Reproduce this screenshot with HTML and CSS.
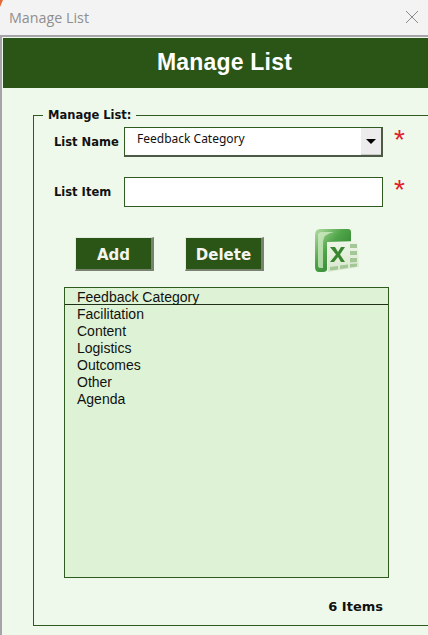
FILE: index.html
```html
<!DOCTYPE html>
<html lang="en">
  <head>
    <meta charset="UTF-8" />
    <meta name="viewport" content="width=device-width, initial-scale=1.0" />
    <title>Manage List</title>
    <link rel="stylesheet" href="styles.css">
  </head>
  <body>
    <div class="titlebar">
      <span class="corner"></span>
      <span class="titlebar-text">Manage List</span>
      <svg class="close" width="14" height="14" viewBox="0 0 14 14">
        <path d="M1 1L13 13M13 1L1 13" stroke="#8a8a8a" stroke-width="1" fill="none" />
      </svg>
    </div>

    <div class="window">
      <h1 class="banner">Manage List</h1>

      <fieldset class="panel">
        <legend>Manage List:</legend>

        <div class="field">
          <label class="field-label">List Name</label>
          <div class="combo">
            <span class="combo-value">Feedback Category</span>
            <span class="combo-arrow"><i></i></span>
          </div>
          <span class="required">*</span>
        </div>

        <div class="field field-item">
          <label class="field-label" for="list-item">List Item</label>
          <input class="text-input" id="list-item" type="text" />
          <span class="required">*</span>
        </div>

        <div class="actions">
          <button class="btn">Add</button>
          <button class="btn">Delete</button>
          <svg class="excel" width="46" height="46" viewBox="0 0 46 46">
            <defs>
              <linearGradient id="book" x1="0" y1="0" x2="1" y2="1">
                <stop offset="0" stop-color="#b5dca6" />
                <stop offset="0.4" stop-color="#4fa548" />
                <stop offset="1" stop-color="#1f6e25" />
              </linearGradient>
              <linearGradient id="sheet" x1="0" y1="0" x2="0" y2="1">
                <stop offset="0" stop-color="#eef5e8" />
                <stop offset="1" stop-color="#d9e8cd" />
              </linearGradient>
              <filter id="soft"><feGaussianBlur stdDeviation="0.4" /></filter>
            </defs>
            <g filter="url(#soft)">
              <path d="M6 2H34Q37 2 37 5V15H16Q13 15 13 18V42Q13 45 9 45H5Q1 45 1 40V8Q1 2 6 2Z" fill="url(#book)" />
              <path d="M4 8Q4 5 8 5H20Q9 7 9 15V41H6Q4 41 4 38Z" fill="#d3ecc6" opacity="0.75" />
              <path d="M13 15L44 14L45 40L14 45Z" fill="url(#sheet)" />
              <path d="M16 20L21 20L24 25L27 20L31 20L26 27.5L31 35L27 35L24 30L20 35L16 35L22 27.5Z" fill="#37872f" />
              <path d="M36 17L43 17V21L36 21ZM36 24L43 24V28L36 28ZM36 31L43 31V35L36 35.5ZM36 37L43 36.5V39.5L36 40.5ZM26 38.5L34 37.5V41L26 42ZM16 40L24 39V42.5L16 43.5Z" fill="#a3c796" />
            </g>
          </svg>
        </div>

        <div class="listbox">
          <div class="listbox-head">Feedback Category</div>
          <ul class="listbox-items">
            <li>Facilitation</li>
            <li>Content</li>
            <li>Logistics</li>
            <li>Outcomes</li>
            <li>Other</li>
            <li>Agenda</li>
          </ul>
        </div>

        <div class="count">6 Items</div>
      </fieldset>
    </div>
  </body>
</html>
```

FILE: styles.css
```css
html,
body {
  margin: 0;
  height: 100%;
}
body {
  width: 428px;
  height: 635px;
  overflow: hidden;
  background-color: #eff9eb;
  font-family: 'Liberation Sans', Arial, sans-serif;
  color: #111;
}
.titlebar {
  position: relative;
  display: flex;
  align-items: center;
  justify-content: space-between;
  box-sizing: border-box;
  height: 35px;
  padding: 0 9px 1px 9px;
  background-color: #f3f3f3;
}
.corner {
  position: absolute;
  left: 0;
  top: 0;
  border-top: 7px solid #e2693a;
  border-right: 3px solid transparent;
}
.titlebar-text {
  font-family: 'Open Sans', sans-serif;
  font-size: 14.3px;
  color: #8f8f8f;
}
.window {
  box-sizing: border-box;
  height: 600px;
  border-top: 2px solid #a6a4a8;
  border-left: 2px solid #a6a4a8;
  padding-top: 1px;
}
.banner {
  margin: 0 0 0 1px;
  padding-left: 18px;
  height: 50px;
  line-height: 49px;
  background-color: #2a5517;
  color: #fff;
  font-size: 23px;
  font-weight: bold;
  letter-spacing: 0.2px;
  text-align: center;
}
.panel {
  box-sizing: border-box;
  width: 389px;
  height: 518px;
  margin: 20px 0 0 31px;
  padding: 0 30px 0 20px;
  border: 1px solid #2f5a20;
}
.panel legend {
  margin-left: -11px;
  padding: 0 5px;
  font-family: 'DejaVu Sans', sans-serif;
  font-size: 11.5px;
  font-weight: bold;
  line-height: 14px;
}
.field {
  display: flex;
  align-items: center;
  height: 30px;
  margin-top: 5px;
}
.field-item {
  margin-top: 20px;
}
.field-label {
  width: 70px;
  flex: none;
  font-family: 'DejaVu Sans', sans-serif;
  font-size: 11.5px;
  font-weight: bold;
}
.combo {
  box-sizing: border-box;
  display: flex;
  justify-content: space-between;
  width: 259px;
  height: 30px;
  background-color: #fff;
  border: 1px solid #2f5a20;
  border-right: 2px solid #4c5a45;
  border-bottom: 2px solid #4c5a45;
}
.combo-value {
  padding: 3px 0 0 12px;
  font-family: 'Noto Sans', sans-serif;
  font-size: 12px;
  line-height: 16px;
}
.combo-arrow {
  display: flex;
  align-items: center;
  justify-content: center;
  width: 20px;
  background-color: #ececec;
  box-shadow: inset 0 -1px 0 #c9c9c9;
}
.combo-arrow i {
  border-top: 5px solid #000;
  border-left: 5px solid transparent;
  border-right: 5px solid transparent;
}
.text-input {
  box-sizing: border-box;
  width: 259px;
  height: 30px;
  padding: 0 6px;
  background-color: #fff;
  border: 1px solid #2f5a20;
  border-radius: 0;
}
.required {
  height: 30px;
  margin-left: 11px;
  color: #e0202c;
  font-size: 28px;
  line-height: 26px;
}
.actions {
  display: flex;
  align-items: flex-start;
  height: 60px;
  margin-left: 21px;
  margin-top: 20px;
}
.btn {
  box-sizing: border-box;
  width: 79px;
  height: 34px;
  margin: 10px 31px 0 0;
  padding: 2px 0 0 0;
  background-color: #2a5517;
  color: #f4f4f0;
  border-style: solid;
  border-width: 1px 3px 2px 1px;
  border-color: #e4ece0 #77836f #77836f #e4ece0;
  font-family: 'DejaVu Sans', sans-serif;
  font-size: 15px;
  font-weight: bold;
}
.excel {
  margin-left: 19px;
}
.listbox {
  box-sizing: border-box;
  width: 325px;
  height: 291px;
  margin-left: 10px;
  background-color: #def3d5;
  border: 1px solid #2f5a20;
  font-size: 14px;
  line-height: 17px;
}
.listbox-head {
  height: 15px;
  padding: 1px 0 0 12px;
  border-bottom: 1px solid #1f2f18;
}
.listbox-items {
  margin: 0;
  padding: 1px 0 0 12px;
  list-style: none;
}
.count {
  width: 319px;
  margin: 21px 0 0 10px;
  font-family: 'DejaVu Sans', sans-serif;
  font-size: 13px;
  font-weight: bold;
  text-align: right;
}
```
